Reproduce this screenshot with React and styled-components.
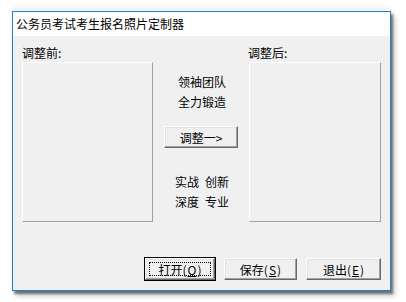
import React from 'react'
import styled, { createGlobalStyle } from 'styled-components'

const Global = createGlobalStyle`
  html, body {
    margin: 0;
    padding: 0;
    background: #ffffff;
  }
  body {
    font-family: "Noto Sans CJK SC", "Liberation Sans", sans-serif;
    font-size: 12px;
    color: #000;
  }
`

const Page = styled.div`
  width: 406px;
  height: 302px;
  padding: 11px 0 0 12px;
  box-sizing: border-box;
`

const Window = styled.div`
  width: 379px;
  height: 280px;
  box-sizing: border-box;
  border: 1px solid #1883d7;
  background: #f0f0f0;
  display: flex;
  flex-direction: column;
  box-shadow: 2px 3px 2px rgba(0, 0, 0, 0.45), 4px 5px 5px rgba(0, 0, 0, 0.2), 0 -4px 6px rgba(0, 0, 0, 0.06);
`

const TitleBar = styled.div`
  height: 24px;
  background: #fff;
  display: flex;
  align-items: center;
  padding-left: 3px;
  font-size: 12px;
  line-height: 12px;
`

const Body = styled.div`
  flex: 1;
  padding: 9px 9px 10px 9px;
  display: flex;
  flex-direction: column;
`

const Columns = styled.div`
  display: grid;
  grid-template-columns: 131px 1fr 132px;
`

const Side = styled.div`
  display: flex;
  flex-direction: column;
`

const Label = styled.div`
  height: 15px;
  line-height: 15px;
  margin: 0 0 2px ${p => p.$indent || 0}px;
`

const Preview = styled.div`
  height: 160px;
  box-sizing: border-box;
  border-top: 1px solid #fff;
  border-left: 1px solid #fff;
  border-right: 1px solid #a0a0a0;
  border-bottom: 1px solid #a0a0a0;
`

const Middle = styled.div`
  display: flex;
  flex-direction: column;
  align-items: center;
  padding-top: 27px;
`

const Slogan = styled.div`
  line-height: 20px;
  text-align: center;
  white-space: pre;
  margin-left: 2px;
  margin-top: ${p => p.$gap || 0}px;
`

const Button = styled.button`
  font-family: inherit;
  font-size: 12px;
  color: #000;
  width: ${p => p.$w || 72}px;
  height: 22px;
  padding: 0;
  background: #f0f0f0;
  border: 1px solid;
  border-color: #fff #696969 #696969 #fff;
  box-shadow: inset -1px -1px 0 #a0a0a0, inset 1px 1px 0 #e3e3e3;
  outline: ${p => (p.$default ? '1px solid #000' : 'none')};
  outline-offset: 0;
  display: flex;
  align-items: center;
  justify-content: center;
  position: relative;

  ${p => p.$default && `
    &::after {
      content: "";
      position: absolute;
      inset: 3px;
      border: 1px dotted #000;
    }
  `}
`

const Footer = styled.div`
  margin-top: auto;
  display: flex;
  justify-content: flex-end;
  gap: 9px;
`

const Key = styled.span`
  text-decoration: underline;
  margin: 0 1px;
`

export default function App() {
  return (
    <>
      <Global />
      <Page>
        <Window>
          <TitleBar>公务员考试考生报名照片定制器</TitleBar>
          <Body>
            <Columns>
              <Side>
                <Label>调整前:</Label>
                <Preview />
              </Side>
              <Middle>
                <Slogan>领袖团队</Slogan>
                <Slogan>全力锻造</Slogan>
                <Button $w={74} style={{ marginTop: 14 }}>调整一&gt;</Button>
                <Slogan $gap={24}>{'实战\u2002创新'}</Slogan>
                <Slogan>{'深度\u2002专业'}</Slogan>
              </Middle>
              <Side>
                <Label $indent={-1}>调整后:</Label>
                <Preview />
              </Side>
            </Columns>
            <Footer>
              <Button $w={70} $default>打开(<Key>O</Key>)</Button>
              <Button $w={73}>保存(<Key>S</Key>)</Button>
              <Button $w={75}>退出(<Key>E</Key>)</Button>
            </Footer>
          </Body>
        </Window>
      </Page>
    </>
  )
}
